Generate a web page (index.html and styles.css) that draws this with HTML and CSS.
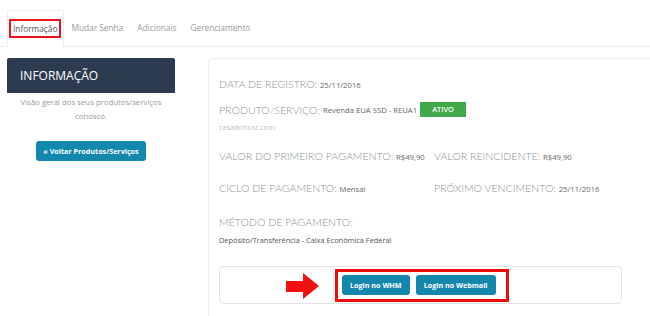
FILE: index.html
```html
<!DOCTYPE html>
<html lang="pt-BR">
<head>
    <meta charset="UTF-8">
    <title>Informação do Produto</title>
    <link rel="stylesheet" href="styles.css">
</head>
<body>
    <div class="tabs">
        <div class="tab active"><span class="mark">Informação</span></div>
        <div class="tab">Mudar Senha</div>
        <div class="tab">Adicionais</div>
        <div class="tab">Gerenciamento</div>
    </div>

    <div class="content">
        <div class="sidebar">
            <div class="side-header">INFORMAÇÃO</div>
            <p class="side-text">Visão geral dos seus produtos/serviços conosco.</p>
            <div class="side-actions">
                <a href="#" class="btn btn-back">« Voltar Produtos/Serviços</a>
            </div>
        </div>

        <div class="panel">
            <div class="row first">
                <span class="label">Data de Registro:</span> <span class="value">25/11/2016</span>
            </div>
            <div class="row product">
                <span class="label">Produto/Serviço:</span> <span class="value">Revenda EUA SSD - REUA1</span><span class="badge">ATIVO</span>
            </div>
            <div class="domain">casadohost.com</div>

            <div class="row cols pay">
                <div class="col"><span class="label">Valor do Primeiro Pagamento:</span> <span class="value">R$49,90</span></div>
                <div class="col"><span class="label">Valor Reincidente:</span> <span class="value">R$49,90</span></div>
            </div>
            <div class="row cols cycle">
                <div class="col"><span class="label">Ciclo de Pagamento:</span> <span class="value">Mensal</span></div>
                <div class="col"><span class="label">Próximo Vencimento:</span> <span class="value">25/11/2016</span></div>
            </div>
            <div class="row method">
                <span class="label">Método de Pagamento:</span>
            </div>
            <div class="method-value">Depósito/Transferência - Caixa Econômica Federal</div>

            <div class="login-box">
                <span class="arrow">
                    <svg width="34" height="26" viewBox="0 0 34 26">
                        <polygon points="0,8 17,8 17,0 33,13 17,26 17,19 0,19" fill="#f01010"/>
                    </svg>
                </span>
                <div class="login-buttons">
                    <a href="#" class="btn btn-login">Login no WHM</a>
                    <a href="#" class="btn btn-login">Login no Webmail</a>
                </div>
            </div>
        </div>
    </div>
</body>
</html>
```

FILE: styles.css
```css
body {
    margin: 0;
    font-family: 'Open Sans', sans-serif;
    background: #fff;
    overflow: hidden;
}
.tabs {
    display: flex;
    align-items: flex-end;
    padding: 10px 0 0 7px;
    border-bottom: 1px solid #eceeee;
    height: 36px;
}
.tab {
    font-size: 8.3px;
    color: #999;
    height: 36px;
    line-height: 36px;
    padding: 0 7px;
    box-sizing: border-box;
}
.tab.active {
    color: #555;
    border: 1px solid #eceeee;
    border-bottom: none;
    background: #fff;
    margin-bottom: -1px;
    height: 37px;
    padding: 0 2px 0 1px;
}
.mark {
    border: 2px solid #e8141c;
    padding: 2px 2px;
}
.content {
    display: flex;
    align-items: flex-start;
    padding: 11px 0 0 7px;
}
.sidebar {
    width: 168px;
    flex-shrink: 0;
}
.side-header {
    background: #2d3b50;
    color: #fff;
    font-size: 12px;
    height: 35px;
    line-height: 35px;
    padding-left: 13px;
    border-radius: 2px 2px 0 0;
}
.side-text {
    font-size: 7.8px;
    color: #999;
    text-align: center;
    line-height: 14px;
    margin: 2px 4px 0;
}
.side-actions {
    text-align: center;
    margin-top: 14px;
}
.btn {
    display: inline-block;
    background: #1487ad;
    color: #fff;
    font-weight: 700;
    text-decoration: none;
    border-radius: 3px;
    font-size: 7.2px;
}
.btn-back {
    padding: 0 7px;
    height: 20px;
    line-height: 20px;
}
.panel {
    margin-left: 33px;
    width: 470px;
    flex-shrink: 0;
    border: 1px solid #e8eded;
    border-radius: 4px;
    padding: 0 0 10px 10px;
    height: 270px;
}
.row {
    color: #8b9395;
    font-size: 10.6px;
    line-height: 14px;
    height: 14px;
}
.label {
    font-family: 'Lato', sans-serif;
    font-weight: 300;
    font-size: 10.6px;
    text-transform: uppercase;
}
.value {
    font-size: 7.7px;
    color: #666;
}
.row.first {
    margin-top: 18px;
}
.row.product {
    margin-top: 11px;
    display: flex;
    align-items: center;
    height: 15px;
}
.row.product .value {
    margin-left: 3px;
}
.badge {
    background: #3ea84a;
    color: #fff;
    font-size: 7.4px;
    font-weight: 600;
    width: 46px;
    height: 15px;
    line-height: 15px;
    text-align: center;
    margin-left: 3px;
}
.domain {
    font-size: 7.4px;
    line-height: 12px;
    height: 12px;
    color: #bdbdbd;
    filter: blur(0.7px);
    margin-top: 4px;
}
.cols {
    display: flex;
}
.col {
    width: 215px;
}
.row.pay {
    margin-top: 16px;
}
.row.cycle {
    margin-top: 18px;
}
.row.method {
    margin-top: 20px;
}
.method-value {
    font-size: 7.4px;
    line-height: 12px;
    height: 12px;
    color: #555;
    margin-top: 5px;
}
.login-box {
    margin-top: 20px;
    width: 403px;
    height: 38px;
    box-sizing: border-box;
    border: 1px solid #e2e5e5;
    border-radius: 4px;
    display: flex;
    align-items: center;
    padding-left: 66px;
}
.arrow {
    display: flex;
    margin-top: 1px;
}
.login-buttons {
    margin-left: 15px;
    border: 3px solid #ef0c0c;
    height: 33px;
    box-sizing: border-box;
    display: flex;
    align-items: center;
    padding: 0 10px 0 4px;
    gap: 6px;
}
.btn-login {
    height: 20px;
    line-height: 20px;
    padding: 0 8px;
    font-size: 7.2px;
}
```
